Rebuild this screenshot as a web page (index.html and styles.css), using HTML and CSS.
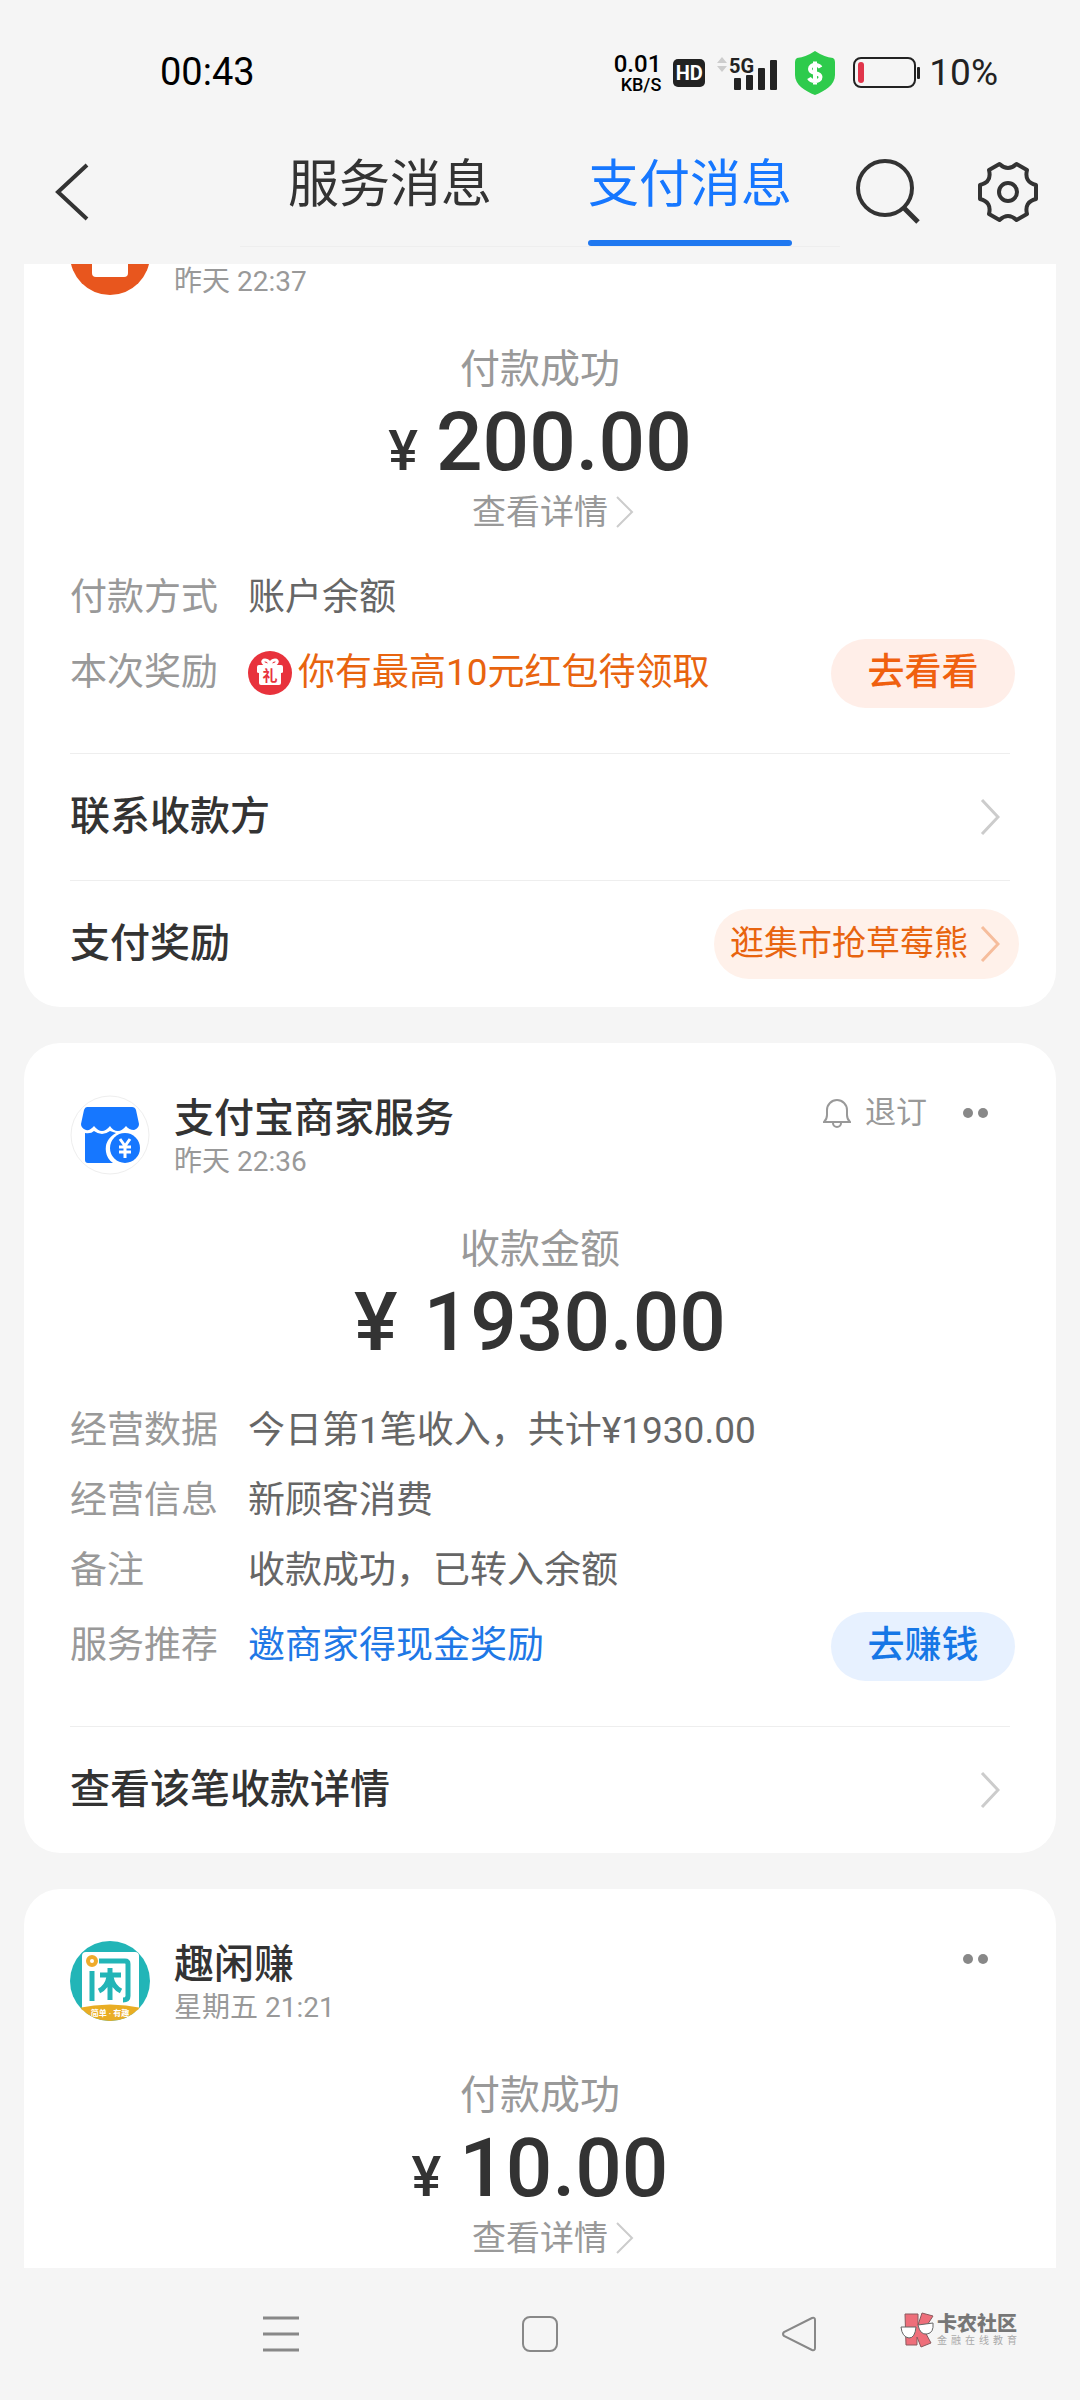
FILE: index.html
```html
<!DOCTYPE html>
<html lang="zh-CN">
<head>
<meta charset="utf-8">
<meta name="viewport" content="width=device-width, initial-scale=1">
<title>支付消息</title>
<link rel="stylesheet" href="styles.css">
</head>
<body>
<div class="screen">
  <div class="status">
    <span class="clock">00:43</span>
    <div class="status-icons">
      <div class="speed"><span class="speed-value">0.01</span><span class="speed-unit">KB/S</span></div>
      <span class="hd">HD</span>
      <svg class="signal" width="60" height="34" viewBox="0 0 60 34" aria-hidden="true">
        <path d="M0 7l5-6 5 6zM0 10h10l-5 6z" fill="#cdcdcd"/>
        <text x="12" y="17" class="signal-text">5G</text>
        <g fill="#222"><rect x="17" y="22" width="7" height="12" rx="1"/><rect x="29" y="19" width="7" height="15" rx="1"/><rect x="41" y="12" width="7" height="22" rx="1"/><rect x="53" y="4" width="7" height="30" rx="1"/></g>
      </svg>
      <svg class="shield" width="40" height="44" viewBox="0 0 40 44" aria-hidden="true">
        <path d="M20 0Q29 6 38 7Q40 8 40 11V24C40 34 30 40 20 44C10 40 0 34 0 24V11Q0 8 2 7Q11 6 20 0z" fill="#2ecb4c"/>
        <path d="M25.500 16.500C24.500 14.500 22.500 14 20 14C17 14 15 15.500 15 18C15 20.500 17 21.300 20 22C23 22.700 25.500 23.500 25.500 26C25.500 28.700 23 30 20 30C17 30 15 29 14 27M20 10.500V33.500" fill="none" stroke="#fff" stroke-width="4"/>
      </svg>
      <svg class="battery" width="68" height="32" viewBox="0 0 68 32" aria-hidden="true">
        <rect x="1" y="1" width="61" height="29" rx="7" fill="none" stroke="#222" stroke-width="2"/>
        <rect x="5" y="5" width="6" height="21" rx="3" fill="#e0354b"/>
        <rect x="64" y="10" width="3" height="12" rx="1" fill="#222"/>
      </svg>
      <span class="percent">10%</span>
    </div>
  </div>

  <header class="topbar">
    <button class="icon-button back" aria-label="返回">
      <svg width="34" height="58" viewBox="0 0 34 58"><path d="M32 2L3 29L32 56" fill="none" stroke="#333" stroke-width="4"/></svg>
    </button>
    <nav class="tabs">
      <a class="tab" href="#service">服务消息</a>
      <a class="tab tab-active" href="#pay">支付消息</a>
    </nav>
    <div class="tools">
      <button class="icon-button" aria-label="搜索">
        <svg width="64" height="66" viewBox="0 0 64 66"><circle cx="29" cy="29" r="27" fill="none" stroke="#333" stroke-width="4"/><path d="M48 49L62 63" stroke="#333" stroke-width="5"/></svg>
      </button>
      <button class="icon-button" aria-label="设置">
        <svg width="62" height="62" viewBox="0 0 62 62" fill="none" stroke="#333" stroke-width="4"><circle cx="31" cy="31" r="9"/><path stroke-linejoin="round" d="M22.500 3Q31 11 39.500 3L50 9Q47 21 59 24V38Q47 41 50 53L39.500 59Q31 51 22.500 59L12 53Q15 41 3 38V24Q15 21 12 9Z"/></svg>
      </button>
    </div>
  </header>

  <main class="feed">
    <article class="card card-cut-top">
      <div class="card-head">
        <svg class="avatar" viewBox="0 49 80 31" aria-hidden="true"><circle cx="40" cy="40" r="40" fill="#e8561e"/><rect x="22" y="24" width="36" height="38" rx="4" fill="#fff"/></svg>
        <div class="sender"><time class="when">昨天 22:37</time></div>
      </div>
      <div class="summary">
        <p class="caption">付款成功</p>
        <p class="amount"><span class="yen-small">¥</span>200.00</p>
        <a class="detail" href="#detail">查看详情<svg width="18" height="32" viewBox="0 0 18 32" aria-hidden="true"><path d="M1 1L16 16L1 31" fill="none" stroke="#ccc" stroke-width="2"/></svg></a>
      </div>
      <dl class="facts facts-near">
        <div class="fact"><dt>付款方式</dt><dd>账户余额</dd></div>
        <div class="fact fact-action">
          <dt>本次奖励</dt>
          <dd class="promo"><svg width="44" height="44" viewBox="0 0 44 44" aria-hidden="true"><circle cx="22" cy="22" r="22" fill="#e8323c"/><path d="M11 14H33Q35 14 35 16V21Q35 22 33 22V32Q33 34 31 34H13Q11 34 11 32V22Q9 22 9 21V16Q9 14 11 14z" fill="#fff"/><path d="M22 14C14 14 13 9 17 9Q21 9 22 14Q23 9 27 9C31 9 30 14 22 14" fill="none" stroke="#fff" stroke-width="3"/><text x="22" y="30" text-anchor="middle" class="gift-text">礼</text></svg>你有最高10元红包待领取</dd>
          <button class="pill pill-orange">去看看</button>
        </div>
      </dl>
      <a class="row" href="#contact"><span>联系收款方</span><svg class="row-arrow" width="20" height="36" viewBox="0 0 20 36" aria-hidden="true"><path d="M2 1L18 18L2 35" fill="none" stroke="#ccc" stroke-width="3"/></svg></a>
      <a class="row" href="#reward"><span>支付奖励</span><span class="chip">逛集市抢草莓熊<svg width="20" height="36" viewBox="0 0 20 36" aria-hidden="true"><path d="M2 1L18 18L2 35" fill="none" stroke="#f6bd9c" stroke-width="3"/></svg></span></a>
    </article>

    <article class="card">
      <div class="card-head">
        <svg class="avatar" viewBox="0 0 80 80" aria-hidden="true">
          <circle cx="40" cy="40" r="39" fill="#fff" stroke="#eee"/>
          <path d="M17 12H62Q65 12 66 15L69 29Q69 33 64 35Q59 35 56 31Q52 36 48 36Q43 36 40 31Q36 36 32 36Q28 36 24 31Q20 36 16 35Q11 33 11 29L14 15Q15 12 17 12z" fill="#1677ff"/>
          <path d="M15 38Q21 39 24 36Q32 42 40 36L46 38Q34 45 36 57Q37 64 43 68H18Q15 68 15 65z" fill="#1677ff"/>
          <circle cx="55" cy="53" r="15" fill="#1677ff"/>
          <path d="M50 44l5 7l5-7M55 51v12M49 52h12M49 57h12" fill="none" stroke="#fff" stroke-width="3"/>
        </svg>
        <div class="sender"><h2 class="name">支付宝商家服务</h2><time class="when">昨天 22:36</time></div>
        <div class="head-tools">
          <button class="unsubscribe"><svg width="28" height="30" viewBox="0 0 28 30" fill="none" stroke="#999" stroke-width="2" aria-hidden="true"><path d="M1 24H27Q24 21 24 17V12A10 10 0 0 0 4 12V17Q4 21 1 24zM10 25a4 4 0 0 0 8 0"/></svg>退订</button>
          <button class="more" aria-label="更多"><span class="dot"></span><span class="dot"></span></button>
        </div>
      </div>
      <div class="summary">
        <p class="caption">收款金额</p>
        <p class="amount"><span class="yen">¥</span>1930.00</p>
      </div>
      <dl class="facts">
        <div class="fact"><dt>经营数据</dt><dd>今日第1笔收入，共计¥1930.00</dd></div>
        <div class="fact"><dt>经营信息</dt><dd>新顾客消费</dd></div>
        <div class="fact"><dt>备注</dt><dd>收款成功，已转入余额</dd></div>
        <div class="fact fact-action"><dt>服务推荐</dt><dd class="link-blue">邀商家得现金奖励</dd><button class="pill pill-blue">去赚钱</button></div>
      </dl>
      <a class="row" href="#receipt"><span>查看该笔收款详情</span><svg class="row-arrow" width="20" height="36" viewBox="0 0 20 36" aria-hidden="true"><path d="M2 1L18 18L2 35" fill="none" stroke="#ccc" stroke-width="3"/></svg></a>
    </article>

    <article class="card card-cut-bottom">
      <div class="card-head">
        <svg class="avatar" viewBox="0 0 80 80" aria-hidden="true">
          <defs><clipPath id="round"><circle cx="40" cy="40" r="40"/></clipPath></defs>
          <g clip-path="url(#round)">
            <rect width="80" height="80" fill="#22b5b7"/>
            <rect x="12" y="11" width="57" height="60" rx="4" fill="#fff"/>
            <path d="M22 30V60M29 20H55Q58 20 58 23V55Q58 59 53 59M30 34H51M40 27V59M39 36Q37 46 29 50M41 36Q43 46 51 50" fill="none" stroke="#22b5b7" stroke-width="5"/>
            <circle cx="22" cy="20" r="4" fill="#fff" stroke="#efab2c" stroke-width="4"/>
            <path d="M8 67Q40 60 72 67V80H8z" fill="#e9ad24"/>
            <text x="40" y="75" text-anchor="middle" class="avatar-note">简单 · 有趣</text>
          </g>
        </svg>
        <div class="sender"><h2 class="name">趣闲赚</h2><time class="when">星期五 21:21</time></div>
        <div class="head-tools"><button class="more" aria-label="更多"><span class="dot"></span><span class="dot"></span></button></div>
      </div>
      <div class="summary">
        <p class="caption">付款成功</p>
        <p class="amount"><span class="yen-small">¥</span>10.00</p>
        <a class="detail" href="#detail">查看详情<svg width="18" height="32" viewBox="0 0 18 32" aria-hidden="true"><path d="M1 1L16 16L1 31" fill="none" stroke="#ccc" stroke-width="2"/></svg></a>
      </div>
    </article>
  </main>

  <footer class="sysnav">
    <button class="icon-button" aria-label="最近任务"><svg width="36" height="36" viewBox="0 0 36 36" stroke="#888" stroke-width="3"><path d="M0 2H36M0 18H36M0 34H36"/></svg></button>
    <button class="icon-button" aria-label="主屏幕"><svg width="36" height="36" viewBox="0 0 36 36"><rect x="1" y="1" width="34" height="34" rx="7" fill="none" stroke="#888" stroke-width="2"/></svg></button>
    <button class="icon-button" aria-label="返回上一级"><svg width="36" height="36" viewBox="0 0 36 36"><path d="M31 2L3 16Q1 18 3 20L31 34Q34 35 34 32V4Q34 1 31 2z" fill="none" stroke="#888" stroke-width="2"/></svg></button>
    <div class="mark">
      <svg width="34" height="36" viewBox="0 0 34 36" aria-hidden="true">
        <g fill="#ee6e7a" stroke="#8a5a5e" stroke-width="1"><path d="M5 2H18V13L22 1L33 4L24 18L31 31L21 35L17 25V33H6z"/></g>
        <path d="M1 15H16Q15 26 9 26Q2 25 1 15zM18 13L33 11Q34 21 27 22Q20 23 18 13z" fill="#fff" stroke="#666"/>
      </svg>
      <div class="mark-text"><span class="mark-name">卡农社区</span><span class="mark-note">金融在线教育</span></div>
    </div>
  </footer>
</div>
</body>
</html>
```

FILE: styles.css
```css
* { box-sizing: border-box; }

body {
  margin: 0;
  background: #f5f5f5;
  color: #333;
  font-family: Roboto, "Noto Sans CJK SC", sans-serif;
  font-size: 37px;
  line-height: 1.4;
}

p, h2, dl, dd { margin: 0; }
a { color: inherit; text-decoration: none; }
svg { display: block; flex: none; }

button {
  border: 0;
  padding: 0;
  background: none;
  color: inherit;
  font: inherit;
}

.screen {
  display: flex;
  flex-direction: column;
  min-height: 100vh;
}

/* Status bar */
.status {
  display: flex;
  justify-content: space-between;
  align-items: center;
  height: 132px;
  padding: 14px 82px 0 160px;
}
.clock { color: #000; font-size: 38px; }
.status-icons { display: flex; align-items: center; }
.speed {
  display: flex;
  flex-direction: column;
  align-items: flex-end;
  color: #000;
  font-weight: 500;
  margin-right: 12px;
}
.speed-value { font-size: 24px; line-height: 24px; }
.speed-unit { font-size: 18px; line-height: 18px; }
.hd {
  width: 32px;
  height: 28px;
  border-radius: 5px;
  background: #222;
  color: #fff;
  font-size: 20px;
  font-weight: 700;
  line-height: 29px;
  text-align: center;
  margin-right: 12px;
}
.signal { margin-right: 18px; overflow: visible; }
.signal-text { font-size: 20px; font-weight: 700; fill: #222; }
.shield { margin-right: 18px; }
.battery { margin-right: 8px; }
.percent { color: #222; font-size: 37px; }

/* Top bar */
.topbar {
  display: grid;
  grid-template-columns: 240px 1fr 240px;
  height: 115px;
  margin-bottom: 17px;
}
.icon-button { display: flex; align-items: center; justify-content: center; }
.back { justify-content: flex-start; padding-left: 55px; padding-top: 4px; }
.tabs { display: flex; border-bottom: 1px solid #eee; }
.tab {
  flex: 1;
  display: flex;
  justify-content: center;
  align-items: center;
  position: relative;
  padding-bottom: 8px;
  font-size: 51px;
}
.tab-active { color: #1677ff; }
.tab-active::after {
  content: "";
  position: absolute;
  left: 50%;
  bottom: 0;
  width: 204px;
  height: 6px;
  margin-left: -102px;
  border-radius: 3px;
  background: #1f78f0;
}
.tools {
  display: flex;
  justify-content: space-between;
  padding: 4px 41px 0 16px;
}

/* Cards */
.feed {
  flex: 1;
  display: flex;
  flex-direction: column;
  gap: 36px;
  padding: 0 24px;
}
.card { border-radius: 36px; background: #fff; }
.card-cut-top { border-top-left-radius: 0; border-top-right-radius: 0; }
.card-cut-bottom {
  flex: 1;
  border-bottom-left-radius: 0;
  border-bottom-right-radius: 0;
}
.card-head {
  display: flex;
  align-items: flex-end;
  padding: 50px 68px 0 46px;
}
.avatar { width: 80px; height: 80px; margin-right: 24px; }
.card-cut-top .card-head { padding-top: 0; }
.card-cut-top .avatar { height: 31px; }
.avatar-note { font-size: 8px; font-weight: 700; fill: #fff; }
.gift-text { font-size: 15px; font-weight: 700; fill: #e8323c; }
.sender { display: flex; flex-direction: column; }
.name { margin-bottom: 4px; font-size: 40px; font-weight: 500; line-height: 52px; }
.when { color: #999; font-size: 28px; line-height: 26px; }
.head-tools {
  display: flex;
  align-items: center;
  align-self: flex-start;
  gap: 36px;
  height: 40px;
  margin-left: auto;
  color: #999;
}
.unsubscribe {
  display: flex;
  align-items: center;
  gap: 14px;
  font-size: 31px;
  line-height: 40px;
}
.more { display: flex; gap: 5px; }
.dot { width: 10px; height: 10px; border-radius: 5px; background: #888; }

.summary {
  display: flex;
  flex-direction: column;
  align-items: center;
  padding-top: 45px;
}
.caption { color: #999; font-size: 40px; line-height: 60px; }
.amount { font-size: 82px; font-weight: 500; line-height: 84px; }
.yen { margin-right: 26px; }
.yen-small { margin-right: 18px; font-size: 56px; line-height: 56px; }
.detail {
  display: flex;
  align-items: center;
  gap: 8px;
  padding-left: 26px;
  color: #999;
  font-size: 34px;
  line-height: 56px;
}

.facts { padding: 32px 41px 40px 46px; }
.facts-near { padding-top: 23px; }
.fact { display: flex; align-items: center; height: 70px; color: #999; }
.fact-action { height: 80px; }
.fact dt { width: 178px; }
.fact dd { color: #666; }
.fact .promo { display: flex; align-items: center; gap: 6px; color: #e8640f; }
.fact .link-blue { color: #1f78e6; }
.pill {
  width: 184px;
  height: 69px;
  margin-left: auto;
  border-radius: 35px;
  font-weight: 500;
}
.pill-orange { background: #ffeee8; color: #f0600f; }
.pill-blue { background: #e7f1ff; color: #1677e6; }

.row {
  display: flex;
  justify-content: space-between;
  align-items: center;
  height: 127px;
  margin: 0 46px;
  border-top: 1px solid #eee;
  font-size: 40px;
  font-weight: 500;
}
.row-arrow { margin-right: 10px; }
.chip {
  display: flex;
  align-items: center;
  gap: 12px;
  height: 70px;
  margin-right: -9px;
  padding: 0 19px 0 16px;
  border-radius: 35px;
  background: #fff1ea;
  color: #e8640f;
  font-size: 34px;
  font-weight: 400;
}

/* System navigation */
.sysnav {
  position: relative;
  display: flex;
  justify-content: space-around;
  align-items: center;
  height: 132px;
  padding: 0 14%;
}
.mark {
  position: absolute;
  right: 63px;
  top: 44px;
  display: flex;
  align-items: center;
  gap: 3px;
}
.mark-text { display: flex; flex-direction: column; width: 80px; }
.mark-name { color: #777; font-size: 20px; font-weight: 900; line-height: 22px; }
.mark-note { color: #aaa; font-size: 10px; line-height: 12px; text-align-last: justify; }
```
